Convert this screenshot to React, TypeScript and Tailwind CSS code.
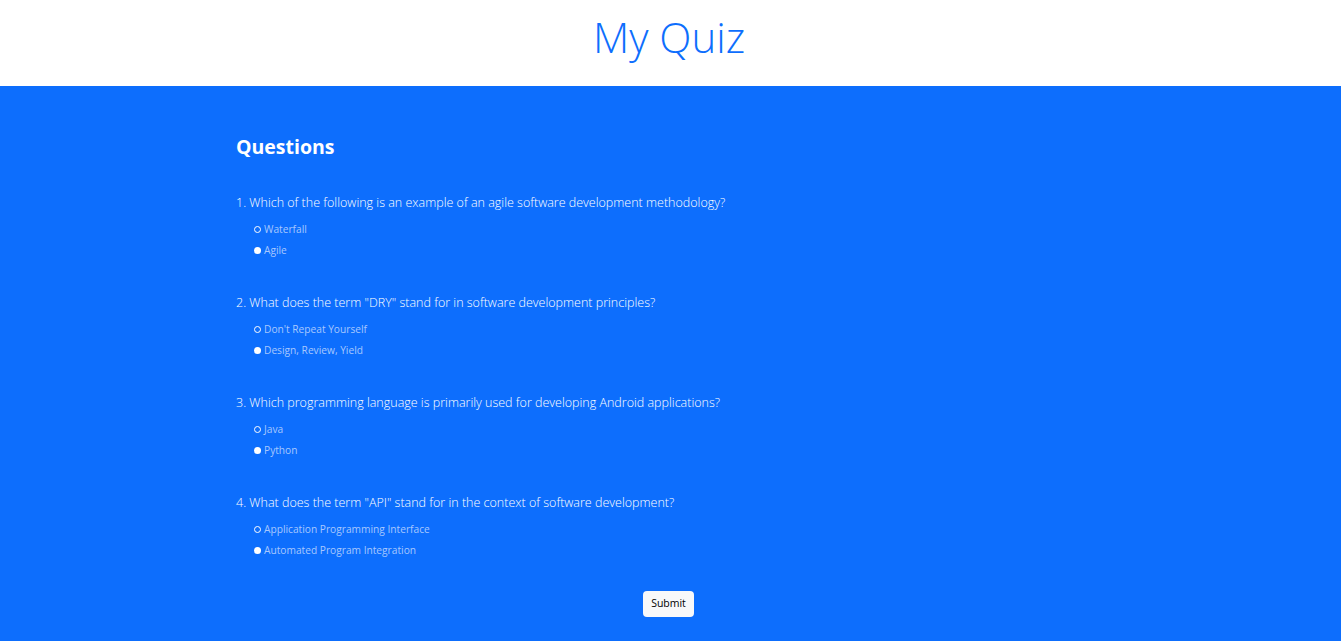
const questions = [
    {
        text: "1. Which of the following is an example of an agile software development methodology?",
        options: ["Waterfall", "Agile"],
    },
    {
        text: '2. What does the term "DRY" stand for in software development principles?',
        options: ["Don't Repeat Yourself", "Design, Review, Yield"],
    },
    {
        text: "3. Which programming language is primarily used for developing Android applications?",
        options: ["Java", "Python"],
    },
    {
        text: '4. What does the term "API" stand for in the context of software development?',
        options: ["Application Programming Interface", "Automated Program Integration"],
    },
];

const App = () => {
    return (
        <div className="min-h-screen bg-[#0d6efd] font-['Open_Sans',sans-serif]">
            <header className="h-[86px] bg-white flex items-center justify-center">
                <h1 className="text-[42px] font-light text-[#0d6efd] leading-none -mt-[12px] -ml-[3px]">My Quiz</h1>
            </header>

            <main className="w-[869px] mx-auto pt-[49px] pb-6">
                <h2 className="text-[19.5px] font-bold text-white leading-[24px]">Questions</h2>

                <div className="mt-[35px]">
                    {questions.map((q, i) => (
                        <div key={i} className="h-[100px]">
                            <p className="text-[12.5px] font-light text-white leading-[18px]">{q.text}</p>
                            <div className="mt-[10px] pl-[18px] space-y-[6px]">
                                {q.options.map((opt, j) => (
                                    <label key={j} className="flex items-center gap-[3px] h-[15px]">
                                        {j === 0 ? (
                                            <span className="w-[7px] h-[7px] rounded-full border-[1.5px] border-white bg-[#0d6efd]" />
                                        ) : (
                                            <span className="w-[7px] h-[7px] rounded-full bg-white" />
                                        )}
                                        <span className="text-[10.2px] text-[#a8c8fe]">{opt}</span>
                                    </label>
                                ))}
                            </div>
                        </div>
                    ))}
                </div>

                <div className="flex justify-center -mt-[3px] pr-[4px]">
                    <button className="h-[26px] px-[8px] bg-[#f8f9fa] rounded-[4px] text-[10.5px] text-black">
                        Submit
                    </button>
                </div>
            </main>
        </div>
    );
};

export default App;
